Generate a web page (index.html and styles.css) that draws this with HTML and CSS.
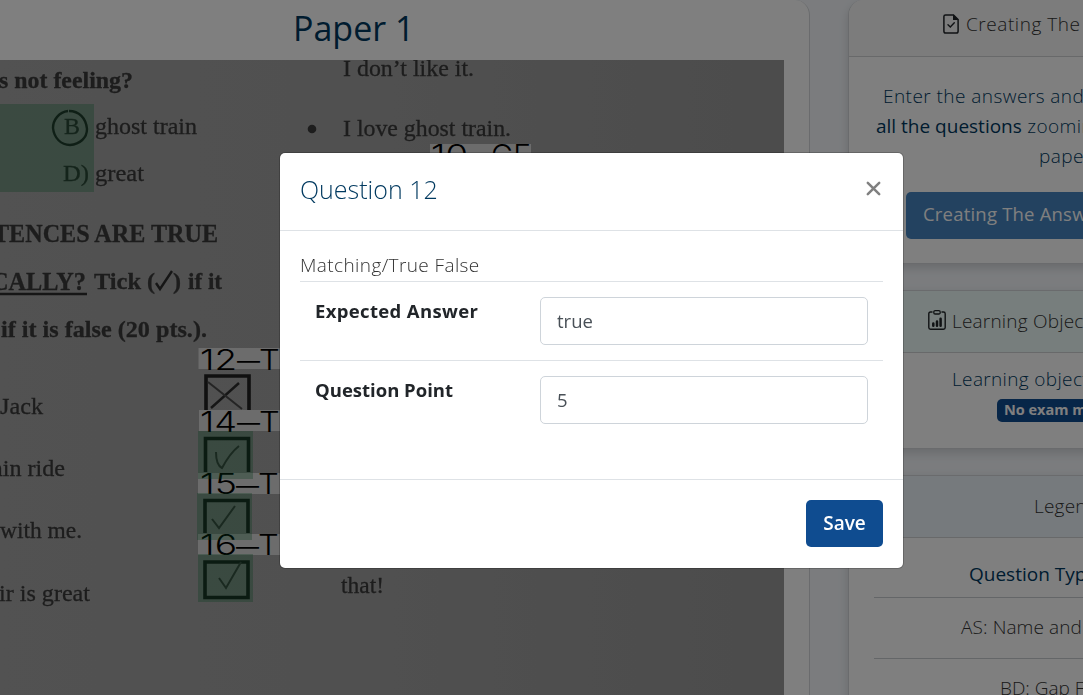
FILE: index.html
```html
<!DOCTYPE html>
<html lang="en">
<head>
<meta charset="utf-8">
<title>Paper 1</title>
<link rel="stylesheet" href="styles.css">
</head>
<body>
<div class="page">
  <main class="paper-card">
    <h2 class="paper-title"><span>Paper 1</span></h2>
    <svg class="scan" width="784" height="635" viewBox="0 60 784 635">
      <defs>
        <linearGradient id="shade" x1="0" y1="0" x2="1" y2="0">
          <stop offset="0" stop-color="#a4a4a4"/>
          <stop offset="0.5" stop-color="#a0a0a0"/>
          <stop offset="1" stop-color="#989898"/>
        </linearGradient>
      </defs>
      <rect x="0" y="60" width="784" height="635" fill="url(#shade)"/>
      <g class="print">
        <text class="bold" x="-1" y="88" font-size="23" textLength="134" lengthAdjust="spacingAndGlyphs">s not feeling?</text>
        <text x="64" y="134" font-size="24" textLength="16" lengthAdjust="spacingAndGlyphs">B</text>
        <text x="95" y="134" font-size="24" textLength="102" lengthAdjust="spacingAndGlyphs">ghost train</text>
        <text x="63" y="181" font-size="24" textLength="26" lengthAdjust="spacingAndGlyphs">D)</text>
        <text x="95" y="181" font-size="24" textLength="49" lengthAdjust="spacingAndGlyphs">great</text>
        <text class="bold" x="-7" y="242" font-size="25" textLength="225" lengthAdjust="spacingAndGlyphs">TENCES ARE TRUE</text>
        <text class="bold" x="-9" y="290" font-size="25" textLength="95" lengthAdjust="spacingAndGlyphs">CALLY?</text>
        <text class="bold" x="94" y="289" font-size="24" textLength="47" lengthAdjust="spacingAndGlyphs">Tick</text>
        <text class="bold" x="147" y="289" font-size="24">(</text>
        <text class="bold" x="173" y="289" font-size="24">)</text>
        <text class="bold" x="188" y="289" font-size="24" textLength="34" lengthAdjust="spacingAndGlyphs">if it</text>
        <text class="bold" x="1" y="337" font-size="24" textLength="206" lengthAdjust="spacingAndGlyphs">if it is false (20 pts.).</text>
        <text x="0" y="414" font-size="24" textLength="43" lengthAdjust="spacingAndGlyphs">Jack</text>
        <text x="-8" y="476" font-size="24" textLength="73" lengthAdjust="spacingAndGlyphs">ain ride</text>
        <text x="0" y="538" font-size="24" textLength="82" lengthAdjust="spacingAndGlyphs">with me.</text>
        <text x="-1" y="601" font-size="24" textLength="91" lengthAdjust="spacingAndGlyphs">ir is great</text>
        <text x="343" y="76" font-size="24" textLength="131" lengthAdjust="spacingAndGlyphs">I don’t like it.</text>
        <text x="343" y="136" font-size="24" textLength="168" lengthAdjust="spacingAndGlyphs">I love ghost train.</text>
        <text x="341" y="593" font-size="24" textLength="43" lengthAdjust="spacingAndGlyphs">that!</text>
        <circle cx="312" cy="129" r="4.300"/>
        <path class="pen" d="M0 294H87"/>
        <path class="pen" d="M156 283l4 6L172 271"/>
        <path class="pen" d="M68 111c-9 1-15 9-15 17 1 10 8 17 17 17 10-1 17-7 17-16-1-11-8-18-18-18"/>
        <path class="box" d="M206 410V376H249V410"/>
        <path class="pen" d="M211 408L239 383"/><path class="faint" d="M208 382L242 409"/>
        <path class="box" d="M205.500 472V438.500H248.500V472"/><path class="faint" d="M216 452q0 13 6 16q8-15 17-22"/>
        <path class="box" d="M205 533V500.500H248V533"/><path class="faint" d="M212 519l7 9L235 506"/>
        <path class="box" d="M205 562H248V597.500H205Z"/><path class="faint" d="M219 578l7 10L241 562"/>
      </g>
      <g class="tag-bg">
        <rect x="430" y="144" width="101" height="21"/>
        <rect x="198.500" y="348" width="101" height="21"/>
        <rect x="199" y="410" width="101" height="21"/>
        <rect x="198" y="473" width="101" height="21"/>
        <rect x="198" y="534" width="101" height="21"/>
      </g>
      <g class="tag">
        <text x="431" y="165" textLength="37" lengthAdjust="spacingAndGlyphs">10</text><text x="470" y="165" textLength="20" lengthAdjust="spacingAndGlyphs">–</text><text x="491" y="165" textLength="40" lengthAdjust="spacingAndGlyphs">GF</text>
        <text x="200" y="370" textLength="37" lengthAdjust="spacingAndGlyphs">12</text><text x="237" y="371" textLength="23" lengthAdjust="spacingAndGlyphs">–</text><text x="259" y="370" textLength="40" lengthAdjust="spacingAndGlyphs">TF</text>
        <text x="200" y="432" textLength="37" lengthAdjust="spacingAndGlyphs">14</text><text x="237" y="433" textLength="23" lengthAdjust="spacingAndGlyphs">–</text><text x="259" y="432" textLength="40" lengthAdjust="spacingAndGlyphs">TF</text>
        <text x="200" y="494" textLength="37" lengthAdjust="spacingAndGlyphs">15</text><text x="236" y="496" textLength="23" lengthAdjust="spacingAndGlyphs">–</text><text x="258" y="494" textLength="40" lengthAdjust="spacingAndGlyphs">TF</text>
        <text x="200" y="555" textLength="37" lengthAdjust="spacingAndGlyphs">16</text><text x="236" y="557" textLength="23" lengthAdjust="spacingAndGlyphs">–</text><text x="258" y="555" textLength="40" lengthAdjust="spacingAndGlyphs">TF</text>
      </g>
      <g class="marks">
        <rect x="0" y="104" width="94" height="88"/>
        <rect x="198" y="431" width="55" height="48"/>
        <rect x="197" y="493" width="55" height="47"/>
        <rect x="198" y="554" width="55" height="48"/>
      </g>
    </svg>
  </main>
  <aside class="side">
    <section class="card create">
      <header class="card-head">
        <svg class="icon-file" width="16" height="20" viewBox="0 0 16 20"><path d="M2.500 .9H10.500L15.100 5.500V17.300Q15.100 19.100 13.300 19.100H2.700Q.9 19.100 .9 17.300V2.600Q.9.900 2.500.9Z" fill="none" stroke="#212529" stroke-width="1.500"/><path d="M10 .5V5.900H15.500Z" fill="#212529"/><path d="M5 10.800l2.300 2.200 4-4.200" fill="none" stroke="#212529" stroke-width="1.400" stroke-linecap="round"/></svg>
        <span class="t-create">Creating The Answer Key</span>
      </header>
      <div class="card-body">
        <p class="line l1">Enter the answers and points of</p>
        <p class="line l2"><b>all the questions</b> zooming in the</p>
        <p class="line l3">paper.</p>
        <button class="btn-key">Creating The Answer Key</button>
      </div>
    </section>
    <section class="card learn">
      <header class="card-head mint">
        <svg class="icon-clip" width="18" height="20" viewBox="0 0 18 20"><path d="M4.500 2H2.500Q.8 2 .8 3.700V17.500Q.8 19.200 2.500 19.200H15.500Q17.200 19.200 17.200 17.500V3.700Q17.200 2 15.500 2H13.500" fill="none" stroke="#212529" stroke-width="1.400"/><rect x="5.800" y=".7" width="6.400" height="3.300" rx="1.300" fill="none" stroke="#212529" stroke-width="1.300"/><path d="M5.300 15.800V13.500M9 15.800V11.500M12.600 15.800V8.800" stroke="#212529" stroke-width="2.500" stroke-linecap="round"/></svg>
        <span class="t-learn">Learning Objectives</span>
      </header>
      <div class="card-body">
        <p class="line l4">Learning objectives of the exam</p>
        <span class="badge">No exam matched</span>
      </div>
    </section>
    <section class="card legend">
      <header class="card-head blue"><span class="t-legend">Legend</span></header>
      <div class="legend-list">
        <div class="item q"><span>Question Types</span></div>
        <div class="item as"><span>AS: Name and Surname</span></div>
        <div class="item bd"><span>BD: Gap Filling</span></div>
      </div>
    </section>
  </aside>
</div>
<div class="backdrop">
  <div class="modal">
    <div class="modal-head">
      <h5 class="modal-title">Question 12</h5>
      <svg class="close" width="15" height="15" viewBox="0 0 15 15"><path d="M1.800 1.800L13.200 13.200M13.200 1.800L1.800 13.200"/></svg>
    </div>
    <div class="modal-body">
      <div class="kind">Matching/True False</div>
      <div class="row"><label class="lab1">Expected Answer</label><div class="field"><span class="v1">true</span></div></div>
      <div class="row"><label class="lab2">Question Point</label><div class="field"><span>5</span></div></div>
    </div>
    <div class="modal-foot"><button class="save">Save</button></div>
  </div>
</div>
</body>
</html>
```
FILE: styles.css
```css
* { box-sizing: border-box; }
body {
  margin: 0;
  height: 695px;
  overflow: hidden;
  background: #f6f9fd;
  font: 300 19px/30px "Open Sans", "Noto Sans", sans-serif;
  color: #333;
}
h2, h5, p { margin: 0; font-weight: inherit; }
button { border: 0; font: inherit; }
.page { display: flex; gap: 38px; width: 1083px; height: 695px; overflow: hidden; }
.paper-card {
  flex: 0 0 810px;
  height: 695px;
  background: #fff;
  border-right: 1px solid #d4d7da;
  border-radius: 0 15px 0 0;
}
.paper-title {
  height: 60px;
  padding-left: 293px;
  font-size: 34px;
  font-weight: 400;
  line-height: 57px;
  color: #00395f;
  white-space: nowrap;
}
.scan { display: block; overflow: hidden; }
.print { font-family: "Liberation Serif", serif; fill: #3a3a3a; filter: blur(0.6px); }
.print text { stroke: #3a3a3a; stroke-width: 0.3px; }
.bold { font-weight: 700; }
.pen { fill: none; stroke: #2c2c2c; stroke-width: 2.4; }
.faint { fill: none; stroke: #484848; stroke-width: 2; }
.box { fill: none; stroke: #202020; stroke-width: 3.6; }
.tag-bg { fill: #d8d8d8; }
.tag { font: 300 29px Inter, sans-serif; fill: #000; }
.marks { fill: #007030; fill-opacity: 0.28; }

.side { flex: 0 0 460px; display: flex; flex-direction: column; gap: 26px; }
.card { flex: none; background: #fff; border: 1px solid #d4d7da; box-shadow: 0 4px 10px rgba(0, 0, 0, 0.15); }
.create { height: 264px; border-radius: 15px 0 0 0; border-top: 0; }
.learn { height: 159px; }
.legend { height: 260px; }
.card-head { display: flex; border-bottom: 1px solid #d0d3d5; white-space: nowrap; background: #f8f8f8; }
.create .card-head { height: 57px; padding: 9px 0 0 94px; gap: 7px; border-radius: 15px 0 0 0; letter-spacing: 0.55px; }
.icon-file { margin-top: 5px; }
.learn .card-head { height: 62px; padding: 15px 0 0 79px; gap: 6px; background: #eefdfa; letter-spacing: 0.2px; }
.icon-clip { margin-top: 4px; }
.legend .card-head { height: 62px; padding: 15px 0 0 185px; background: #edf5fb; letter-spacing: 0.2px; }
.line { white-space: nowrap; color: #00395f; letter-spacing: 0.45px; }
.line b { font-weight: 400; letter-spacing: 0; }
.create .card-body { padding-top: 24px; }
.l1 { padding-left: 34px; }
.l2 { padding-left: 27px; }
.l3 { padding-left: 190px; }
.btn-key {
  display: block;
  width: 320px;
  height: 47px;
  margin: 21px 0 0 57px;
  padding: 0 0 3px 17px;
  border-radius: 5px;
  background: #4684c0;
  color: #fff;
  font-weight: 500;
  font-size: 18.500px;
  letter-spacing: 0.2px;
  text-align: left;
}
.learn .card-body { padding-top: 11px; }
.l4 { padding-left: 103px; letter-spacing: 0.35px; }
.badge {
  display: block;
  width: 200px;
  height: 23px;
  margin: 5px 0 0 148px;
  padding-left: 7px;
  border-radius: 5px;
  background: #0f4c90;
  color: #fff;
  font-size: 14.500px;
  font-weight: 700;
  line-height: 22px;
}
.legend-list { padding: 0 0 0 25px; }
.item { height: 61px; border-bottom: 1px solid #c9cdd0; white-space: nowrap; padding-top: 14px; }
.q { height: 60px; padding: 21px 0 0 95px; font-weight: 400; color: #00395f; }
.as { padding-left: 87px; letter-spacing: 0.1px; }
.bd { padding-left: 126px; }

.backdrop { position: fixed; inset: 0; padding: 153px 0 0 280px; background: rgba(0, 0, 0, 0.5); }
.modal {
  width: 623px;
  height: 415px;
  background: #fff;
  border-radius: 5px;
  box-shadow: 0 0 0 1px rgba(0, 0, 0, 0.2);
}
.modal-head { display: flex; justify-content: space-between; height: 78px; padding: 17px 22px 0 20px; border-bottom: 1px solid #dee2e6; }
.modal-title { font-size: 25px; line-height: 38px; color: #00395f; font-weight: 350; }
.close { margin-top: 11px; fill: none; stroke: #808080; stroke-width: 2.500; stroke-linecap: round; }
.modal-body { height: 249px; padding: 19px 20px 0; border-bottom: 1px solid #dee2e6; }
.kind { height: 31px; letter-spacing: 0.4px; }
.row { display: flex; height: 79px; padding: 15px; border-top: 1px solid #dee2e6; }
.row label { flex: 0 0 225px; height: 28px; line-height: 28px; font-size: 18.500px; font-weight: 700; color: #212529; }
.lab1 { letter-spacing: 0.35px; }
.field { flex: 1; height: 48px; padding-left: 16px; border: 1px solid #ced4da; border-radius: 5px; color: #495057; font-weight: 400; font-size: 18.500px; line-height: 46px; }
.modal-foot { display: flex; justify-content: flex-end; padding: 20px 20px 0; }
.save { width: 77px; height: 47px; padding: 0 0 2px; border-radius: 5px; background: #0f4c90; color: #fff; font-size: 19px; font-weight: 600; }
```
